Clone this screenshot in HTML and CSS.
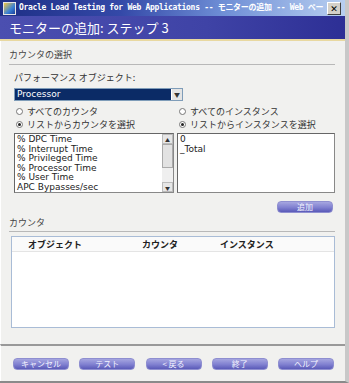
FILE: index.html
```html
<!DOCTYPE html>
<html lang="ja">
<head>
    <meta charset="UTF-8">
    <title>モニターの追加</title>
    <link rel="stylesheet" href="styles.css">
</head>
<body>
    <div class="window">
        <div class="titlebar">
            <span class="app-icon"></span>
            <span class="title-text">Oracle Load Testing for Web Applications -- モニターの追加 -- Web ペー</span>
            <span class="close-btn">&#10005;</span>
        </div>
        <div class="banner">モニターの追加: ステップ 3</div>

        <div class="content">
            <div class="section-title">カウンタの選択</div>

            <div class="field-label">パフォーマンス オブジェクト:</div>
            <div class="select">
                <span class="select-value">Processor</span>
                <span class="select-arrow">&#9660;</span>
            </div>

            <div class="choose">
                <div class="col">
                    <div class="radio"><span class="dot"></span>すべてのカウンタ</div>
                    <div class="radio"><span class="dot checked"></span>リストからカウンタを選択</div>
                    <div class="listbox">
                        <ul>
                            <li>% DPC Time</li>
                            <li>% Interrupt Time</li>
                            <li>% Privileged Time</li>
                            <li>% Processor Time</li>
                            <li>% User Time</li>
                            <li>APC Bypasses/sec</li>
                        </ul>
                        <div class="scrollbar">
                            <span class="sb-btn">&#9650;</span>
                            <span class="sb-thumb"></span>
                            <span class="sb-track"></span>
                            <span class="sb-btn">&#9660;</span>
                        </div>
                    </div>
                </div>
                <div class="col col-right">
                    <div class="radio"><span class="dot"></span>すべてのインスタンス</div>
                    <div class="radio"><span class="dot checked"></span>リストからインスタンスを選択</div>
                    <div class="listbox">
                        <ul>
                            <li>0</li>
                            <li>_Total</li>
                        </ul>
                    </div>
                </div>
            </div>

            <div class="add-row">
                <button class="btn">追加</button>
            </div>

            <div class="section-title small">カウンタ</div>

            <div class="counter-table">
                <div class="table-head">
                    <span class="th-object">オブジェクト</span>
                    <span class="th-counter">カウンタ</span>
                    <span class="th-instance">インスタンス</span>
                </div>
                <div class="table-body"></div>
            </div>
        </div>

        <div class="footer">
            <button class="btn">キャンセル</button>
            <button class="btn">テスト</button>
            <button class="btn">&lt; 戻る</button>
            <button class="btn">終了</button>
            <button class="btn">ヘルプ</button>
        </div>
    </div>
</body>
</html>
```

FILE: styles.css
```css
body {
    margin: 0;
    font-family: 'Noto Sans CJK JP', 'DejaVu Sans', sans-serif;
    font-size: 9px;
    color: #333;
    background-color: #d8d8d8;
}

.window {
    width: 345px;
    height: 381px;
    background-color: #f1f1ef;
    border-right: 4px solid #c8c8c8;
    border-bottom: 2px solid #8a8a8a;
    display: flex;
    flex-direction: column;
}

.titlebar {
    height: 16px;
    display: flex;
    align-items: center;
    background: linear-gradient(to right, #1e2f86 0%, #3449a8 35%, #6f8fd6 65%, #b8cff0 100%);
    color: white;
    overflow: hidden;
}

.app-icon {
    width: 11px;
    height: 11px;
    margin: 0 3px 0 3px;
    background: linear-gradient(135deg, #f3c843 0%, #3a82d6 60%, #1a3f9a 100%);
    border: 1px solid #e5e5e5;
    flex-shrink: 0;
}

.title-text {
    font-family: 'DejaVu Sans Mono', 'Noto Sans CJK JP', monospace;
    font-weight: bold;
    font-size: 8px;
    line-height: 12px;
    letter-spacing: -0.3px;
    white-space: nowrap;
    flex: 1;
}

.close-btn {
    width: 12px;
    height: 11px;
    margin: 0 4px 0 2px;
    background-color: #d4d0c8;
    border: 1px solid #fff;
    border-right-color: #404040;
    border-bottom-color: #404040;
    color: #000;
    font-size: 9px;
    line-height: 11px;
    text-align: center;
    font-weight: bold;
    flex-shrink: 0;
}

.banner {
    height: 23px;
    padding-left: 9px;
    background: linear-gradient(to right, #4b4fb0 0%, #3f43a6 60%, #2d2f95 100%);
    border-bottom: 2px solid #e8d8a0;
    color: white;
    font-size: 13px;
    line-height: 23px;
}

.content {
    flex: 1;
    padding: 7px 10px 0 8px;
    border-left: 1px solid #fff;
}

.section-title {
    color: #444;
    padding-bottom: 3px;
    border-bottom: 1px solid #b8b8b8;
    line-height: 13px;
}

.field-label {
    margin: 6px 0 4px 5px;
    line-height: 13px;
}

.select {
    margin-left: 5px;
    width: 167px;
    height: 11px;
    display: flex;
    border: 1px solid #7f9db9;
    background-color: #fff;
}

.select-value {
    flex: 1;
    background-color: #0b2b66;
    color: #fff;
    font-family: 'DejaVu Sans', sans-serif;
    font-size: 9px;
    line-height: 11px;
    padding-left: 2px;
    margin: 0 1px 0 0;
}

.select-arrow {
    width: 10px;
    font-size: 6px;
    line-height: 11px;
    text-align: center;
    background-color: #e4e4e4;
    color: #333;
}

.choose {
    display: flex;
    gap: 3px;
    margin: 4px 0 0 5px;
}

.col {
    width: 160px;
}

.col-right {
    flex: 1;
}

.radio {
    display: flex;
    align-items: center;
    height: 13px;
    line-height: 13px;
    padding-left: 2px;
}

.dot {
    width: 7px;
    height: 7px;
    border-radius: 50%;
    border: 1px solid #777;
    background-color: #fff;
    margin-right: 4px;
    box-sizing: border-box;
    position: relative;
}

.dot.checked::after {
    content: "";
    position: absolute;
    left: 1px;
    top: 1px;
    width: 3px;
    height: 3px;
    border-radius: 50%;
    background-color: #222;
}

.listbox {
    height: 60px;
    margin-top: 2px;
    background-color: #fff;
    border: 1px solid #888;
    border-top-color: #666;
    border-left-color: #666;
    box-sizing: border-box;
    display: flex;
}

.listbox ul {
    list-style: none;
    margin: 0;
    padding: 1px 2px;
    flex: 1;
    font-family: 'DejaVu Sans', sans-serif;
    font-size: 9px;
    line-height: 9.6px;
    color: #222;
}

.scrollbar {
    width: 11px;
    display: flex;
    flex-direction: column;
    background-color: #efefef;
}

.sb-btn {
    height: 10px;
    font-size: 5px;
    line-height: 10px;
    text-align: center;
    background-color: #e6e6e6;
    border: 1px solid #bbb;
    box-sizing: border-box;
}

.sb-thumb {
    height: 24px;
    background-color: #e2e2e2;
    border: 1px solid #aaa;
    box-sizing: border-box;
}

.sb-track {
    flex: 1;
}

.add-row {
    display: flex;
    justify-content: flex-end;
    margin: 8px 2px 0 0;
}

.btn {
    width: 56px;
    height: 12px;
    padding: 0;
    border: 1px solid #8f8fd0;
    border-radius: 4px;
    background: linear-gradient(to bottom, #a6a6e0 0%, #8080d0 55%, #5a5ab8 100%);
    color: #f4f4ff;
    font-family: 'Noto Sans CJK JP', sans-serif;
    font-size: 8px;
    line-height: 10px;
}

.section-title.small {
    margin-top: 3px;
    padding-bottom: 2px;
}

.counter-table {
    margin: 4px 0 0 2px;
    height: 90px;
    border: 1px solid #a9bcd6;
    background-color: #fff;
    display: flex;
    flex-direction: column;
}

.table-head {
    height: 14px;
    display: flex;
    align-items: center;
    background-color: #fafafa;
    border-bottom: 1px solid #e4e4e4;
    font-weight: bold;
    color: #222;
}

.th-object {
    width: 114px;
    padding-left: 16px;
}

.th-counter {
    width: 78px;
}

.table-body {
    flex: 1;
}

.footer {
    height: 35px;
    border-top: 2px solid #999;
    display: flex;
    align-items: center;
    justify-content: space-between;
    padding: 0 11px 0 12px;
    border-left: 1px solid #fff;
}
```
